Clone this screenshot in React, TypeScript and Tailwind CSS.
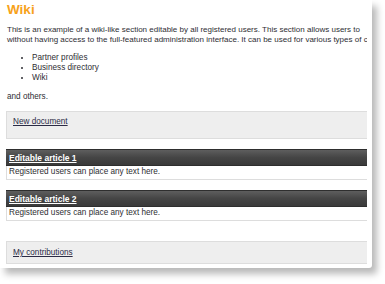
export default function App() {
  const font = { fontFamily: "'Liberation Sans', Arial, sans-serif" };

  return (
    <div className="w-[385px] h-[284px] bg-white" style={font}>
      <div className="w-[372px] h-[268px] bg-white shadow-[5px_6px_7px_rgba(0,0,0,0.28)] rounded-br-[3px] overflow-hidden pl-[6px] pr-[5px]">
        <div className="overflow-hidden text-[8.2px] leading-[10px] text-[#2e2e33]">
          <h1 className="pl-[1px] pt-[2px] text-[13.5px] leading-[16px] font-bold text-[#f7a21b]">
            Wiki
          </h1>

          <p className="mt-[7px] pl-[1px] whitespace-nowrap text-[8px]">
            This is an example of a wiki-like section editable by all registered users. This section allows users to
            <br />
            without having access to the full-featured administration interface. It can be used for various types of content
          </p>

          <ul className="mt-[8px] pl-[26px] list-disc">
            <li>Partner profiles</li>
            <li>Business directory</li>
            <li>Wiki</li>
          </ul>

          <p className="mt-[9px] pl-[1px]">and others.</p>

          <div className="mt-[9px] w-[400px] h-[28px] bg-[#eeeeee] border border-[#dddddd] pl-[6px] pt-[5px]">
            <a href="#" className="underline text-[#2b2b45]">
              New document
            </a>
          </div>

          {["Editable article 1", "Editable article 2"].map((title) => (
            <div key={title} className="mt-[10px] w-[400px]">
              <div className="h-[17px] bg-gradient-to-b from-[#5e5e5e] via-[#454545] to-[#3a3a3a] border-y border-[#2e2e2e] pl-[3px] pt-[3px]">
                <a href="#" className="underline font-bold text-white text-[8.5px]">
                  {title}
                </a>
              </div>
              <div className="h-[14px] bg-white border-l border-b border-[#dddddd] pl-[2px] pt-[1px]">
                Registered users can place any text here.
              </div>
            </div>
          ))}

          <div className="mt-[20px] w-[400px] h-[23px] bg-[#eeeeee] border border-[#dddddd] pl-[6px] pt-[6px]">
            <a href="#" className="underline text-[#2b2b45]">
              My contributions
            </a>
          </div>
        </div>
      </div>
    </div>
  );
}
